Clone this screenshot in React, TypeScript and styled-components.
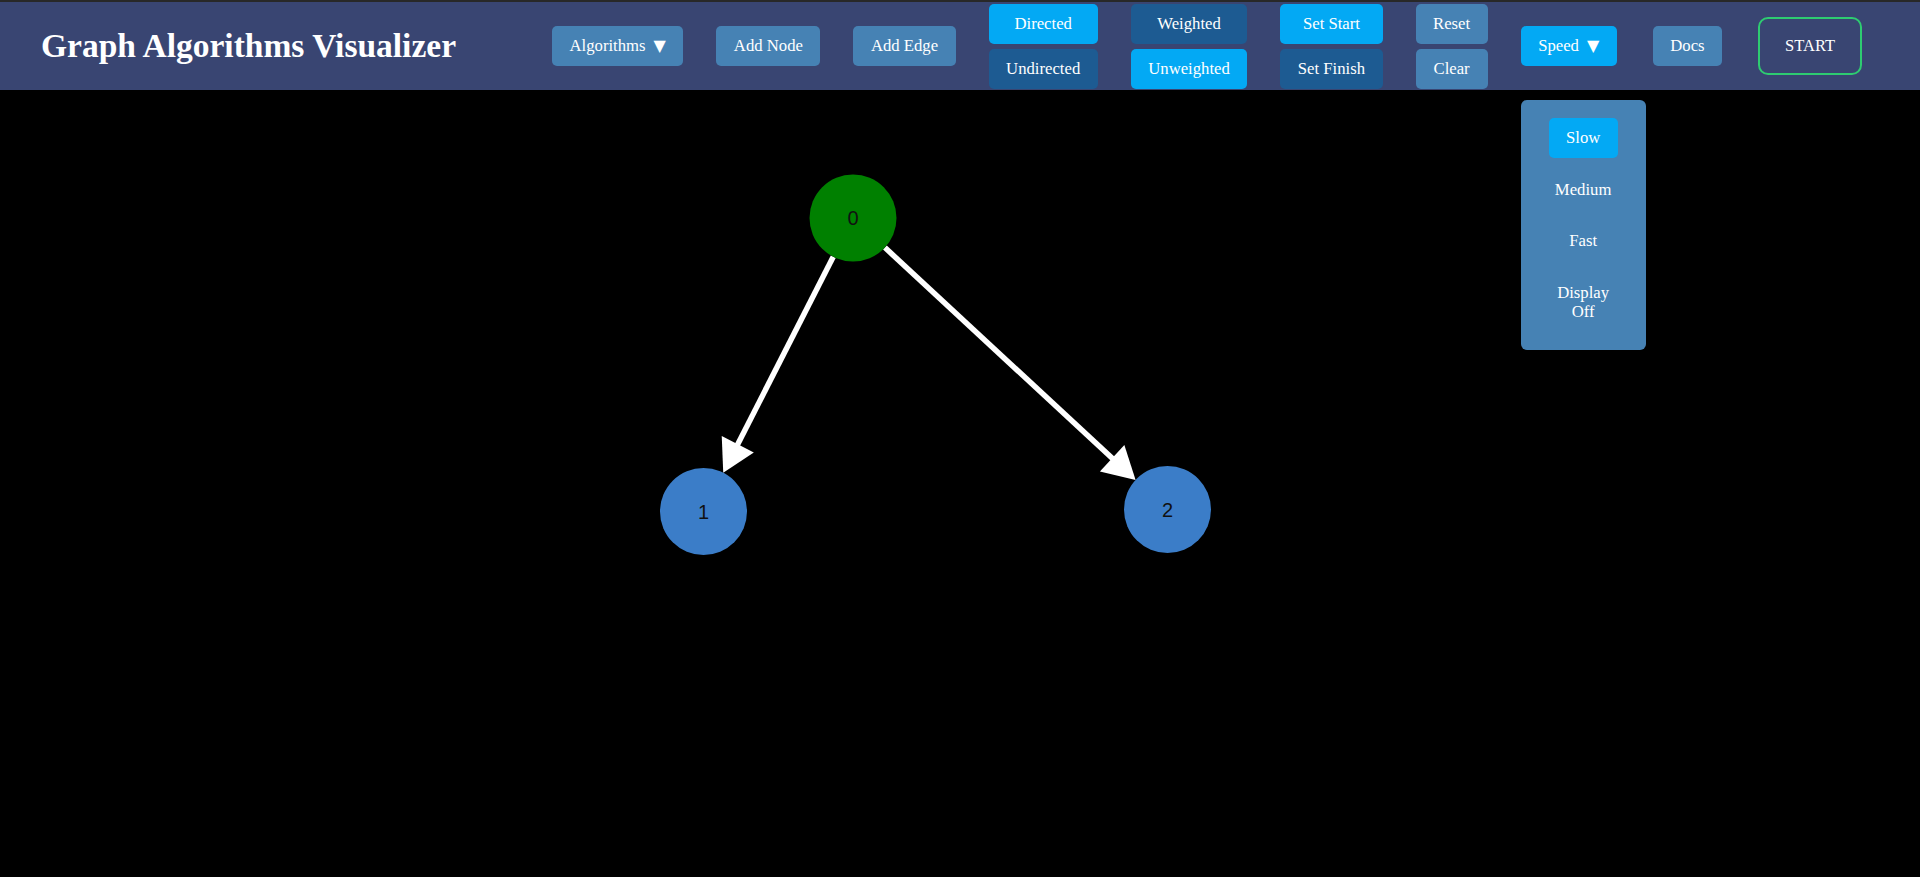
import React from "react";
import styled, { createGlobalStyle } from "styled-components";

const GlobalStyle = createGlobalStyle`
  html, body {
    margin: 0;
    padding: 0;
    background: #000;
  }
  body {
    font-family: "Liberation Serif", "Times New Roman", serif;
  }
  #root {
    min-height: 100vh;
  }
`;

const Page = styled.div`
  min-height: 100vh;
  display: flex;
  flex-direction: column;
  background: #000;
`;

const Header = styled.header`
  height: 88px;
  border-top: 2px solid #282828;
  background: #394572;
  display: flex;
  align-items: center;
  padding-left: 41px;
`;

const Title = styled.h1`
  flex: 0 0 511px;
  margin: 0;
  font-size: 33.5px;
  font-weight: bold;
  color: #fff;
  white-space: nowrap;
`;

const Nav = styled.nav`
  display: flex;
  align-items: center;
  gap: 33px;
`;

type Tone = "steel" | "bright" | "dark";

const tones: Record<Tone, string> = {
  steel: "#4682b4",
  bright: "#03a9f4",
  dark: "#1d5b92",
};

const Button = styled.button<{ $tone?: Tone }>`
  font-family: inherit;
  font-size: 16.7px;
  line-height: 20px;
  color: #fff;
  background: ${(p) => tones[p.$tone ?? "steel"]};
  border: none;
  border-radius: 5px;
  padding: 10px 17.5px;
  white-space: nowrap;
  cursor: pointer;
`;

const DocsButton = styled(Button)`
  margin-left: 3px;
`;

const Caret = styled.span`
  margin-left: 8px;
  font-family: "DejaVu Sans", sans-serif;
  font-size: 16px;
  line-height: 20px;
`;

const Stack = styled.div`
  display: flex;
  flex-direction: column;
  gap: 5px;
`;

const StartButton = styled.button`
  margin-left: 3px;
  font-family: inherit;
  font-size: 16.5px;
  line-height: 18px;
  color: #fff;
  background: transparent;
  border: 2px solid #2ecc71;
  border-radius: 10px;
  padding: 18px 25px;
  cursor: pointer;
`;

const SpeedWrap = styled.div`
  position: relative;
`;

const Menu = styled.div`
  position: absolute;
  top: calc(100% + 34px);
  left: 0;
  z-index: 5;
  width: 125px;
  box-sizing: border-box;
  padding: 18px 28px 18px;
  background: #4682b4;
  border-radius: 6px;
  display: flex;
  flex-direction: column;
  gap: 12px;
`;

const MenuItem = styled.button<{ $active?: boolean }>`
  width: 100%;
  font-family: inherit;
  font-size: 16.7px;
  line-height: 19.5px;
  color: #fff;
  background: ${(p) => (p.$active ? "#03a9f4" : "transparent")};
  border: none;
  border-radius: 5px;
  padding: 10px 0;
  cursor: pointer;
`;

const Canvas = styled.main`
  position: relative;
  flex: 1;
  min-height: 787px;
`;

const Board = styled.svg`
  position: absolute;
  inset: 0;
  width: 100%;
  height: 100%;
`;

const Label = styled.text`
  font-family: "Liberation Sans", Arial, sans-serif;
  font-size: 20px;
  fill: #111;
`;

const R = 43.5;
const HEAD = 32;
const HALF = 18;

type GNode = { id: number; x: number; y: number; color: string };

const nodes: GNode[] = [
  { id: 0, x: 853, y: 128, color: "#008000" },
  { id: 1, x: 703.5, y: 421.5, color: "#3b7dc8" },
  { id: 2, x: 1167.5, y: 419.5, color: "#3b7dc8" },
];

const edges: [number, number][] = [
  [0, 1],
  [0, 2],
];

function Edge({ a, b }: { a: GNode; b: GNode }) {
  const dx = b.x - a.x;
  const dy = b.y - a.y;
  const len = Math.hypot(dx, dy);
  const ux = dx / len;
  const uy = dy / len;
  const sx = a.x + ux * R;
  const sy = a.y + uy * R;
  const tx = b.x - ux * R;
  const ty = b.y - uy * R;
  const bx = tx - ux * HEAD;
  const by = ty - uy * HEAD;
  const px = -uy;
  const py = ux;
  const head = `${tx},${ty} ${bx + px * HALF},${by + py * HALF} ${bx - px * HALF},${by - py * HALF}`;
  return (
    <g>
      <line x1={sx} y1={sy} x2={bx + ux * 2} y2={by + uy * 2} stroke="#fff" strokeWidth={5.5} />
      <polygon points={head} fill="#fff" />
    </g>
  );
}

export default function App() {
  return (
    <Page>
      <GlobalStyle />
      <Header>
        <Title>Graph Algorithms Visualizer</Title>
        <Nav>
          <Button>
            Algorithms<Caret>▼</Caret>
          </Button>
          <Button>Add Node</Button>
          <Button>Add Edge</Button>
          <Stack>
            <Button $tone="bright">Directed</Button>
            <Button $tone="dark">Undirected</Button>
          </Stack>
          <Stack>
            <Button $tone="dark">Weighted</Button>
            <Button $tone="bright">Unweighted</Button>
          </Stack>
          <Stack>
            <Button $tone="bright">Set Start</Button>
            <Button $tone="dark">Set Finish</Button>
          </Stack>
          <Stack>
            <Button>Reset</Button>
            <Button>Clear</Button>
          </Stack>
          <SpeedWrap>
            <Button $tone="bright">
              Speed<Caret>▼</Caret>
            </Button>
            <Menu>
              <MenuItem $active>Slow</MenuItem>
              <MenuItem>Medium</MenuItem>
              <MenuItem>Fast</MenuItem>
              <MenuItem>Display Off</MenuItem>
            </Menu>
          </SpeedWrap>
          <DocsButton>Docs</DocsButton>
          <StartButton>START</StartButton>
        </Nav>
      </Header>
      <Canvas>
        <Board>
          {edges.map(([f, t]) => (
            <Edge key={`${f}-${t}`} a={nodes[f]} b={nodes[t]} />
          ))}
          {nodes.map((n) => (
            <g key={n.id}>
              <circle cx={n.x} cy={n.y} r={R} fill={n.color} />
              <Label x={n.x} y={n.y} textAnchor="middle" dominantBaseline="central">
                {n.id}
              </Label>
            </g>
          ))}
        </Board>
      </Canvas>
    </Page>
  );
}
